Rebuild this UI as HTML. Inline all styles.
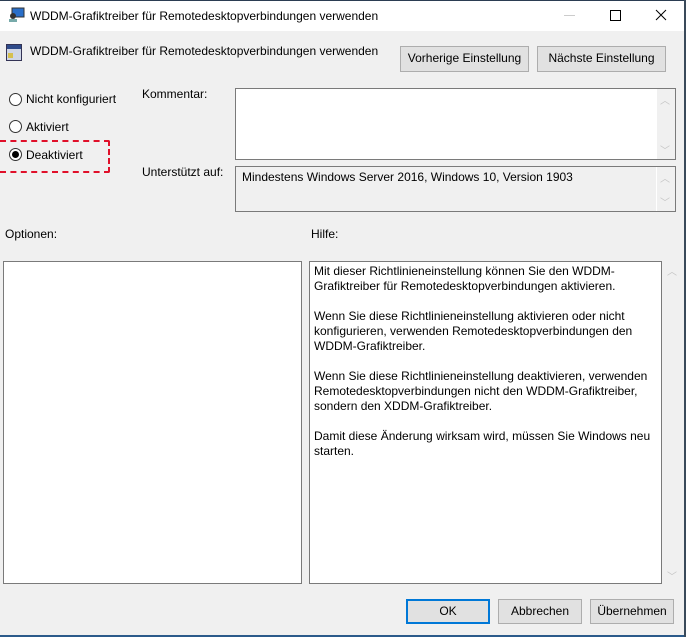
<!DOCTYPE html>
<html><head><meta charset="utf-8"><style>
body{margin:0;width:686px;height:637px;background:#f0f0f0;font-family:"Liberation Sans",sans-serif;font-size:12px;color:#000;position:relative;overflow:hidden}
.a{position:absolute;white-space:nowrap}
.btn{position:absolute;background:#e1e1e1;border:1px solid #adadad;box-sizing:border-box;text-align:center;line-height:23px}
.box{position:absolute;border:1px solid #7a7a7a;box-sizing:border-box;background:#fff}
.rad{position:absolute;width:13px;height:13px;border:1px solid #333;border-radius:50%;box-sizing:border-box;background:#fff}
.arr{position:absolute;color:#c4c4c4;font-size:10px}
</style></head><body>
<div class="a" style="left:0;top:0;width:686px;height:31px;background:#fff"></div>
<div class="a" style="left:0;top:0;width:686px;height:1px;background:#2b3d52"></div>
<svg class="a" style="left:8px;top:7px" width="17" height="16"><rect x="4" y="1" width="12" height="9" fill="#2a6fc9" stroke="#333"/><circle cx="5" cy="9" r="3" fill="#333"/><rect x="1" y="12" width="8" height="3" fill="#7aa"/></svg>
<div class="a" style="left:30px;top:9px">WDDM-Grafiktreiber für Remotedesktopverbindungen verwenden</div>
<div class="a" style="left:564px;top:15px;width:11px;height:1px;background:#ccc"></div>
<div class="a" style="left:610px;top:10px;width:9px;height:9px;border:1px solid #000"></div>
<svg class="a" style="left:655px;top:9px" width="12" height="12"><path d="M1 1L11 11M11 1L1 11" stroke="#000" stroke-width="1"/></svg>
<svg class="a" style="left:6px;top:44px" width="16" height="17"><rect x="0.5" y="0.5" width="15" height="16" fill="#cfd6e6" stroke="#335"/><rect x="1" y="1" width="14" height="4" fill="#2f4b8a"/><rect x="2" y="9" width="5" height="5" fill="#d5c050"/></svg>
<div class="a" style="left:30px;top:44px">WDDM-Grafiktreiber für Remotedesktopverbindungen verwenden</div>
<div class="btn" style="left:400px;top:46px;width:129px;height:26px">Vorherige Einstellung</div>
<div class="btn" style="left:537px;top:46px;width:129px;height:26px">Nächste Einstellung</div>
<div class="rad" style="left:9px;top:93px"></div><div class="a" style="left:26px;top:92px">Nicht konfiguriert</div>
<div class="rad" style="left:9px;top:120px"></div><div class="a" style="left:26px;top:120px">Aktiviert</div>
<div class="rad" style="left:9px;top:148px"></div><div class="a" style="left:12px;top:151px;width:7px;height:7px;border-radius:50%;background:#000"></div><div class="a" style="left:26px;top:148px">Deaktiviert</div>
<div class="a" style="left:0;top:140px;width:108px;height:29px;border:2px dashed #e0102a;border-left:none;border-radius:0 2px 2px 0"></div>
<div class="a" style="left:142px;top:87px">Kommentar:</div>
<div class="box" style="left:235px;top:88px;width:441px;height:72px"></div>
<div class="a" style="left:657px;top:89px;width:18px;height:70px;background:#f0f0f0"></div>
<div class="arr" style="left:660px;top:92px">︿</div><div class="arr" style="left:660px;top:142px">﹀</div>
<div class="a" style="left:142px;top:165px">Unterstützt auf:</div>
<div class="box" style="left:235px;top:166px;width:441px;height:46px;background:#f0f0f0"></div>
<div class="a" style="left:656px;top:167px;width:1px;height:44px;background:#fff"></div>
<div class="a" style="left:242px;top:170px">Mindestens Windows Server 2016, Windows 10, Version 1903</div>
<div class="arr" style="left:660px;top:170px">︿</div><div class="arr" style="left:660px;top:194px">﹀</div>
<div class="a" style="left:5px;top:227px">Optionen:</div>
<div class="a" style="left:311px;top:227px">Hilfe:</div>
<div class="box" style="left:3px;top:261px;width:299px;height:323px"></div>
<div class="box" style="left:309px;top:261px;width:353px;height:323px"></div>
<div class="arr" style="left:667px;top:263px">︿</div><div class="arr" style="left:667px;top:568px">﹀</div>
<div class="a" style="left:314px;top:264px;line-height:15px;white-space:normal;width:340px">Mit dieser Richtlinieneinstellung können Sie den WDDM-Grafiktreiber für Remotedesktopverbindungen aktivieren.<br><br>Wenn Sie diese Richtlinieneinstellung aktivieren oder nicht konfigurieren, verwenden Remotedesktopverbindungen den WDDM-Grafiktreiber.<br><br>Wenn Sie diese Richtlinieneinstellung deaktivieren, verwenden Remotedesktopverbindungen nicht den WDDM-Grafiktreiber, sondern den XDDM-Grafiktreiber.<br><br>Damit diese Änderung wirksam wird, müssen Sie Windows neu starten.</div>
<div class="btn" style="left:406px;top:599px;width:84px;height:25px;border:2px solid #0078d7;line-height:21px">OK</div>
<div class="btn" style="left:498px;top:599px;width:84px;height:25px">Abbrechen</div>
<div class="btn" style="left:590px;top:599px;width:84px;height:25px">Übernehmen</div>
<div class="a" style="left:0;top:635px;width:686px;height:2px;background:#2b5a8a"></div>
<div class="a" style="left:684px;top:0;width:2px;height:637px;background:#3a4a5a"></div>
</body></html>
